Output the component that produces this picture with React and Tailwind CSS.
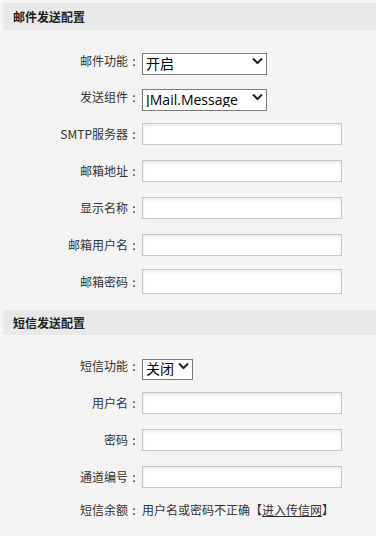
const font = { fontFamily: '"Noto Sans CJK SC", sans-serif' };

function Header({ title, className }) {
  return (
    <div className={`ml-[3px] flex items-center bg-[#e8e8e8] pl-[10px] text-[12px] font-bold text-[#222] ${className}`}>
      {title}
    </div>
  );
}

function Row({ label, className, children }) {
  return (
    <div className={`flex items-center ${className}`}>
      <div className="flex w-[140px] shrink-0 justify-end text-[12px] text-[#333]">
        <span>{label}</span>
        <span className="w-[12px] text-center">:</span>
      </div>
      <div className="ml-[2px] flex">{children}</div>
    </div>
  );
}

function Chevron() {
  return (
    <svg width="11" height="7" viewBox="0 0 11 7" className="pointer-events-none absolute top-1/2 right-[4px] -translate-y-1/2">
      <path d="M1 1l4.5 4.5L10 1" fill="none" stroke="#222" strokeWidth="2" />
    </svg>
  );
}

function Select({ value, options, className }) {
  return (
    <div className={`relative ${className}`}>
      <select
        defaultValue={value}
        className="h-full w-full appearance-none border border-[#7a7a7a] bg-white pl-[3px] text-[14px] leading-none text-black outline-none"
        style={{ fontFamily: '"Open Sans", "Noto Sans CJK SC", sans-serif' }}
      >
        {options.map((o) => (
          <option key={o}>{o}</option>
        ))}
      </select>
      <Chevron />
    </div>
  );
}

function Input({ className = "h-[22px]" }) {
  return (
    <input
      className={`w-[200px] border border-[#c8c8c8] bg-white shadow-[inset_0_2px_3px_rgba(0,0,0,0.08)] outline-none ${className}`}
    />
  );
}

export default function App() {
  return (
    <div className="flex min-h-[536px] w-[376px] flex-col bg-[#f4f4f4] pt-[3px]" style={font}>
      <Header title="邮件发送配置" className="h-[27px]" />

      <Row label="邮件功能" className="mt-[20px]">
        <Select value="开启" options={["开启", "关闭"]} className="h-[22px] w-[125px]" />
      </Row>
      <Row label="发送组件" className="mt-[14px]">
        <Select value="JMail.Message" options={["JMail.Message", "CDO.Message"]} className="h-[22px] w-[125px]" />
      </Row>
      <Row label="SMTP服务器" className="mt-[15px]">
        <Input />
      </Row>
      <Row label="邮箱地址" className="mt-[15px]">
        <Input />
      </Row>
      <Row label="显示名称" className="mt-[15px]">
        <Input />
      </Row>
      <Row label="邮箱用户名" className="mt-[15px]">
        <Input />
      </Row>
      <Row label="邮箱密码" className="mt-[13px]">
        <Input className="h-[25px]" />
      </Row>

      <Header title="短信发送配置" className="mt-[16px] h-[25px]" />

      <Row label="短信功能" className="mt-[20px]">
        <Select value="关闭" options={["关闭", "开启"]} className="h-[21px] w-[51px]" />
      </Row>
      <Row label="用户名" className="mt-[16px]">
        <Input />
      </Row>
      <Row label="密码" className="mt-[15px]">
        <Input />
      </Row>
      <Row label="通道编号" className="mt-[15px]">
        <Input />
      </Row>
      <Row label="短信余额" className="mt-[12px] h-[20px]">
        <span className="text-[12px] text-[#333]">
          用户名或密码不正确【<a className="underline">进入传信网</a>】
        </span>
      </Row>
    </div>
  );
}
